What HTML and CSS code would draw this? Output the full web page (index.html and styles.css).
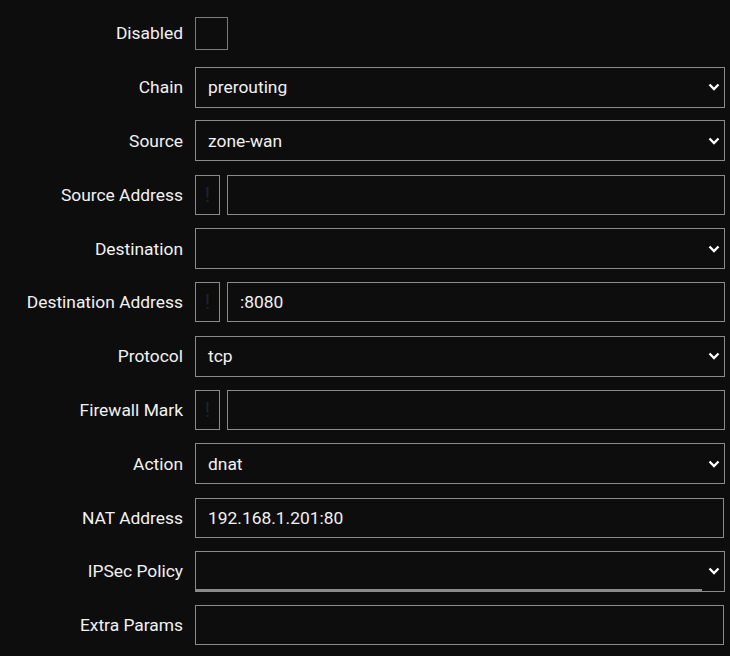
FILE: index.html
```html
<!DOCTYPE html>
<html>
<head>
<meta charset="utf-8">
<link rel="stylesheet" href="styles.css">
</head>
<body>
<form class="form">
  <label class="lbl">Disabled</label>
  <div class="ctl"><span class="check"></span></div>

  <label class="lbl">Chain</label>
  <div class="ctl sel"><div class="box">prerouting</div><svg class="chev" viewBox="0 0 12 8"><path d="M1.5 1.5 L6 6 L10.5 1.5"/></svg></div>

  <label class="lbl">Source</label>
  <div class="ctl sel"><div class="box">zone-wan</div><svg class="chev" viewBox="0 0 12 8"><path d="M1.5 1.5 L6 6 L10.5 1.5"/></svg></div>

  <label class="lbl">Source Address</label>
  <div class="ctl pair"><span class="neg">!</span><div class="box"></div></div>

  <label class="lbl">Destination</label>
  <div class="ctl sel"><div class="box"></div><svg class="chev" viewBox="0 0 12 8"><path d="M1.5 1.5 L6 6 L10.5 1.5"/></svg></div>

  <label class="lbl">Destination Address</label>
  <div class="ctl pair"><span class="neg">!</span><div class="box">:8080</div></div>

  <label class="lbl">Protocol</label>
  <div class="ctl sel"><div class="box">tcp</div><svg class="chev" viewBox="0 0 12 8"><path d="M1.5 1.5 L6 6 L10.5 1.5"/></svg></div>

  <label class="lbl">Firewall Mark</label>
  <div class="ctl pair"><span class="neg">!</span><div class="box"></div></div>

  <label class="lbl">Action</label>
  <div class="ctl sel"><div class="box">dnat</div><svg class="chev" viewBox="0 0 12 8"><path d="M1.5 1.5 L6 6 L10.5 1.5"/></svg></div>

  <label class="lbl">NAT Address</label>
  <div class="ctl"><div class="box narrow">192.168.1.201:80</div></div>

  <label class="lbl">IPSec Policy</label>
  <div class="ctl sel multi"><div class="box"></div><svg class="chev" viewBox="0 0 12 8"><path d="M1.5 1.5 L6 6 L10.5 1.5"/></svg></div>

  <label class="lbl">Extra Params</label>
  <div class="ctl"><div class="box narrow"></div></div>
</form>
</body>
</html>
```

FILE: styles.css
```css
html, body {
  margin: 0;
  padding: 0;
  background: #0d0d0d;
}
body {
  font-family: Roboto, "Noto Sans", sans-serif;
  font-size: 17.4px;
  color: #f2f2f2;
}
.form {
  display: grid;
  grid-template-columns: 183px 530px;
  column-gap: 12px;
  row-gap: 13.8px;
  padding-top: 13.4px;
  grid-auto-rows: 40px;
}
.lbl {
  display: flex;
  align-items: center;
  justify-content: flex-end;
  white-space: nowrap;
}
.ctl {
  display: flex;
  align-items: center;
  position: relative;
}
.check {
  width: 31px;
  height: 31px;
  border: 1px solid #7a7a7a;
  margin-top: 1px;
}
.box {
  box-sizing: border-box;
  height: 40px;
  width: 530px;
  border: 1px solid #8a8a8a;
  padding-left: 12px;
  display: flex;
  align-items: center;
  white-space: nowrap;
}
.box.narrow {
  width: 529px;
}
.sel .box {
  height: 41px;
}
.pair {
  gap: 7px;
}
.pair .box {
  flex: 1;
  width: auto;
}
.neg {
  box-sizing: border-box;
  width: 25px;
  height: 40px;
  border: 1px solid #8a8a8a;
  color: #1a252c;
  display: flex;
  align-items: center;
  justify-content: center;
  font-size: 21px;
  flex: none;
}
.chev {
  position: absolute;
  right: 5px;
  top: 50%;
  width: 12px;
  height: 8px;
  margin-top: -4px;
  fill: none;
  stroke: #ffffff;
  stroke-width: 2.3;
}
.multi::after {
  content: "";
  position: absolute;
  left: 0;
  bottom: 0;
  width: 507px;
  height: 2px;
  background: #8a8a8a;
}
```
